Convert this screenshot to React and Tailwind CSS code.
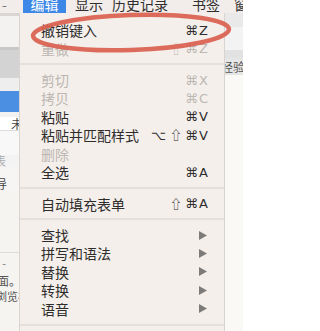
const cjk = { fontFamily: '"Noto Sans CJK SC", "Noto Sans", sans-serif' };

function Arrow() {
  return (
    <svg width="8" height="9" viewBox="0 0 8 9" className="mr-[1px]">
      <path d="M0 0 L8 4.5 L0 9 Z" fill="#7d7b79" />
    </svg>
  );
}

function Keys({ keys }) {
  return (
    <span className="flex items-center gap-[1px] text-[13px] [font-family:'DejaVu_Sans','Liberation_Sans',sans-serif]">
      {keys.split("").map((k, i) =>
        k === "⇧" ? (
          <span key={i} className="mr-[2px] text-[12px] [font-family:'Noto_Sans_CJK_SC','DejaVu_Sans',sans-serif]">
            ⇧
          </span>
        ) : k === "⌥" ? (
          <span key={i} className="mr-[3px]">⌥</span>
        ) : (
          <span key={i}>{k}</span>
        )
      )}
    </span>
  );
}

function Item({ label, keys, disabled, sub }) {
  const color = disabled ? "text-[#bcb7b2]" : "text-[#2e2d2c]";
  return (
    <div className={`flex h-[18.6px] items-center justify-between pl-[21px] pr-[16px] text-[14px] leading-none ${color}`}>
      <span>{label}</span>
      {sub ? <Arrow /> : <Keys keys={keys || ""} />}
    </div>
  );
}

function Sep() {
  return (
    <div className="flex h-[13px] items-center">
      <div className="h-[2px] w-full bg-[#e6e0db]" />
    </div>
  );
}

export default function App() {
  return (
    <div className="relative h-[331px] w-[243px] overflow-hidden bg-[#fbf9f5]" style={cjk}>
      {/* menu bar */}
      <div className="flex h-[13px] items-start overflow-hidden whitespace-nowrap bg-[#f2ecea] text-[14px] leading-[8px] text-[#2f2f2f]">
        <span className="w-[23px] shrink-0 pl-[2px] text-[#777]">-</span>
        <div className="flex h-[13px] w-[43px] shrink-0 justify-center bg-[#3d87e6] text-white">编辑</div>
        <span className="ml-[9px] shrink-0">显示</span>
        <span className="ml-[9px] shrink-0">历史记录</span>
        <span className="ml-[24px] shrink-0">书签</span>
        <span className="ml-[14px] shrink-0">窗</span>
      </div>

      <div className="flex h-[318px]">
        {/* app content on the left */}
        <div className="flex w-[19px] shrink-0 flex-col overflow-hidden whitespace-nowrap text-[12px] leading-none">
          <div className="h-[3px] bg-[#d8d5d2]" />
          <div className="h-[31px] bg-[#f3f2f1]" />
          <div className="h-[3px] bg-[#c8c8c8]" />
          <div className="h-[28px] bg-[#d3d3d3]" />
          <div className="h-[13px] bg-[#eeeeee]" />
          <div className="h-[21px] bg-[#4b8fe2]" />
          <div className="h-[5px] bg-[#f1f1f1]" />
          <div className="flex h-[13px] items-center bg-white pl-[11px] text-[#444]">未</div>
          <div className="h-[1px] bg-[#dddddd]" />
          <div className="h-[24px] bg-[#f8f8f8]" />
          <div className="-ml-[6px] flex h-[12px] items-center bg-[#f3f3f3] text-[#aaa]">表</div>
          <div className="h-[10px] bg-[#f6f5f3]" />
          <div className="-ml-[5px] flex h-[14px] items-center bg-[#f6f5f3] text-[#444]">导</div>
          <div className="h-[61px] bg-[#f6f4f1]" />
          <div className="h-[1px] bg-[#dedad6]" />
          <div className="flex h-[20px] items-center bg-[#f6f4f1] pl-[2px] text-[#888]">-</div>
          <div className="-ml-[3px] flex h-[16px] items-center bg-[#f6f4f1] text-[#555]">面。</div>
          <div className="-ml-[4px] flex h-[15px] items-center bg-[#f6f4f1] text-[11px] text-[#555]">浏览栏</div>
          <div className="flex-1 bg-[#f6f4f1]" />
        </div>

        {/* edit menu */}
        <div className="flex w-[206px] shrink-0 flex-col border-x border-[#d9d4cf] bg-[#f4efeb] pt-[8px]">
          <Item label="撤销键入" keys="⌘Z" />
          <Item label="重做" keys="⇧⌘Z" disabled />
          <Sep />
          <Item label="剪切" keys="⌘X" disabled />
          <Item label="拷贝" keys="⌘C" disabled />
          <Item label="粘贴" keys="⌘V" />
          <Item label="粘贴并匹配样式" keys="⌥⇧⌘V" />
          <Item label="删除" keys="" disabled />
          <Item label="全选" keys="⌘A" />
          <Sep />
          <Item label="自动填充表单" keys="⇧⌘A" />
          <Sep />
          <Item label="查找" sub />
          <Item label="拼写和语法" sub />
          <Item label="替换" sub />
          <Item label="转换" sub />
          <Item label="语音" sub />
          <Sep />
        </div>

        {/* app content on the right */}
        <div className="flex flex-1 flex-col overflow-hidden whitespace-nowrap text-[12px] leading-none">
          <div className="h-[14px] bg-[#e9e9e9]" />
          <div className="h-[23px] bg-[#f3f3f3]" />
          <div className="h-[8px] bg-[#e2e2e2]" />
          <div className="-ml-[4px] flex h-[17px] items-center bg-[#e6e6e6] text-[#555]">经验</div>
          <div className="flex-1 bg-[#fbf9f5]" />
        </div>
      </div>

      {/* red annotation ring */}
      <svg className="pointer-events-none absolute inset-0" width="243" height="331">
        <ellipse
          cx="131"
          cy="32.5"
          rx="98"
          ry="17.5"
          fill="none"
          stroke="#d9604f"
          strokeWidth="4.5"
          opacity="0.92"
          transform="rotate(-2 131 32.5)"
        />
      </svg>
    </div>
  );
}
